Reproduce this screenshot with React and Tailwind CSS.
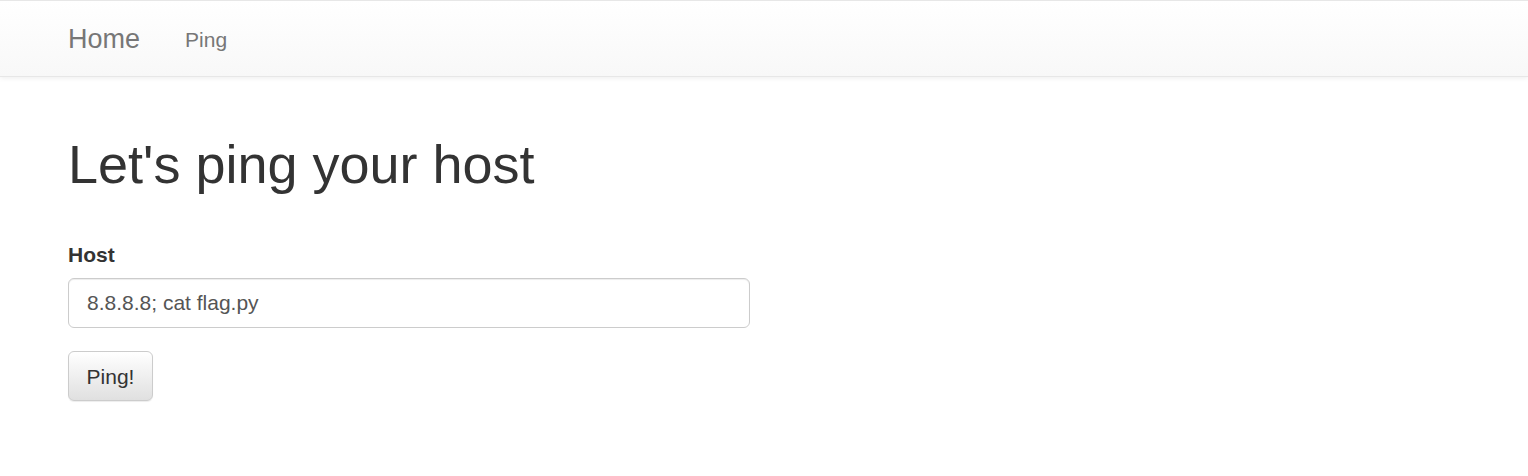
import { useState } from 'react';

export default function App() {
    const [host, setHost] = useState('8.8.8.8; cat flag.py');

    return (
        <div className="min-h-[476px] bg-white font-['Liberation_Sans',Arial,sans-serif] text-[#333]">
            {/* Navbar */}
            <nav className="h-[77px] border-t border-b border-[#e7e7e7] bg-gradient-to-b from-white to-[#f8f8f8] shadow-[0_1px_5px_rgba(0,0,0,0.075)]">
                <div className="flex h-full items-center pl-[68px]">
                    <a href="#" className="text-[27px] leading-none text-[#777] mt-[1px]">Home</a>
                    <a href="#" className="ml-[45px] text-[21px] leading-none text-[#777] mt-[1px]">Ping</a>
                </div>
            </nav>

            {/* Main content */}
            <div className="pl-[68px] pt-[58px]">
                <h1 className="text-[54px] leading-[1.1] font-normal text-[#333] mb-[46px]">Let's ping your host</h1>

                <form onSubmit={(e) => e.preventDefault()}>
                    <label className="block text-[21px] leading-[30px] font-bold mb-[8px]">Host</label>
                    <input
                        type="text"
                        value={host}
                        onChange={(e) => setHost(e.target.value)}
                        className="block w-[682px] h-[50px] px-[18px] py-[9px] text-[21px] text-[#555] bg-white border border-[#ccc] rounded-[6px] shadow-[inset_0_1px_1px_rgba(0,0,0,0.075)] outline-none"
                    />
                    <button
                        type="submit"
                        className="mt-[23px] h-[50px] w-[85px] text-[21px] text-[#333] border border-[#ccc] rounded-[6px] bg-gradient-to-b from-white to-[#e0e0e0] shadow-[inset_0_1px_0_rgba(255,255,255,0.15),0_1px_1px_rgba(0,0,0,0.075)]"
                    >
                        Ping!
                    </button>
                </form>
            </div>
        </div>
    );
}
